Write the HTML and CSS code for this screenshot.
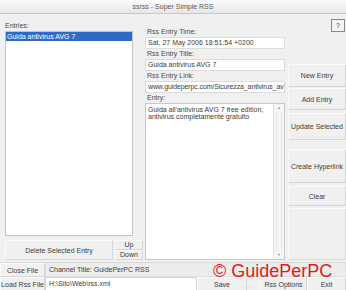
FILE: index.html
```html
<!DOCTYPE html>
<html lang="en">
<head>
    <meta charset="UTF-8">
    <title>ssrss - Super Simple RSS</title>
    <link rel="stylesheet" href="styles.css">
</head>
<body>
    <div class="window">
        <div class="titlebar">ssrss - Super Simple RSS</div>

        <div class="main">
            <div class="col-left">
                <div class="label">Entries:</div>
                <div class="listbox">
                    <div class="list-item selected">Guida antivirus AVG 7</div>
                </div>
                <div class="delete-row">
                    <button class="btn btn-delete">Delete Selected Entry</button>
                    <div class="updown">
                        <button class="btn btn-small">Up</button>
                        <button class="btn btn-small">Down</button>
                    </div>
                </div>
            </div>

            <div class="col-mid">
                <div class="label">Rss Entry Time:</div>
                <div class="field">Sat, 27 May 2006 18:51:54 +0200</div>
                <div class="label">Rss Entry Title:</div>
                <div class="field">Guida antivirus AVG 7</div>
                <div class="label">Rss Entry Link:</div>
                <div class="field field-link">www.guideperpc.com/Sicurezza_antivirus_av</div>
                <div class="label">Entry:</div>
                <div class="entry-box">
                    <div class="entry-text">Guida all'antivirus AVG 7 free edition,<br>antivirus completamente gratuito</div>
                    <div class="scrollbar">
                        <span class="arrow">&#9650;</span>
                        <span class="track"></span>
                        <span class="arrow">&#9660;</span>
                    </div>
                </div>
            </div>

            <div class="col-right">
                <button class="btn btn-help">?</button>
                <button class="btn btn-new">New Entry</button>
                <button class="btn btn-add">Add Entry</button>
                <button class="btn btn-update">Update Selected</button>
                <button class="btn btn-link">Create Hyperlink</button>
                <button class="btn btn-clear">Clear</button>
                <div class="empty-box"></div>
            </div>
        </div>

        <div class="bottom">
            <div class="bottom-row">
                <button class="btn btn-file">Close File</button>
                <div class="channel">Channel Title: GuidePerPC RSS</div>
            </div>
            <div class="bottom-row">
                <button class="btn btn-file">Load Rss File</button>
                <div class="path">H:\Sito\Web\rss.xml</div>
                <button class="btn btn-save">Save</button>
                <div class="spacer"></div>
                <button class="btn btn-options">Rss Options</button>
                <button class="btn btn-exit">Exit</button>
            </div>
        </div>

        <div class="watermark">&copy; GuidePerPC</div>
    </div>
</body>
</html>
```

FILE: styles.css
```css
body {
    margin: 0;
    font-family: "Liberation Sans", Arial, sans-serif;
    font-size: 7px;
    color: #3c3c3c;
    background: #f0f0f0;
}

.window {
    position: relative;
    width: 346px;
    height: 290px;
    overflow: hidden;
    display: flex;
    flex-direction: column;
}

.titlebar {
    height: 13px;
    line-height: 13px;
    text-align: center;
    color: #5a5a5a;
    background: linear-gradient(#fbfbfb, #e6e6e6);
    border-bottom: 1px solid #c8c8c8;
}

.main {
    display: flex;
    height: 246px;
}

.label {
    height: 10px;
    line-height: 10px;
    color: #4a4a4a;
}

.btn {
    font-family: inherit;
    font-size: 7px;
    color: #3c3c3c;
    background: #f0f0f0;
    border: 1px solid #d6d6d6;
    border-top-color: #fafafa;
    border-left-color: #fafafa;
    padding: 0;
    margin: 0;
}

/* left column */
.col-left {
    width: 138px;
    margin-left: 5px;
    padding-top: 7px;
    display: flex;
    flex-direction: column;
}

.listbox {
    height: 203px;
    background: #fff;
    border: 1px solid #c4c4c4;
    margin-right: 10px;
}

.list-item {
    height: 9px;
    line-height: 9px;
    padding-left: 1px;
}

.list-item.selected {
    background: #316ac5;
    color: #fff;
}

.delete-row {
    display: flex;
    gap: 2px;
    margin-top: 4px;
    height: 20px;
}

.btn-delete {
    width: 108px;
}

.updown {
    display: flex;
    flex-direction: column;
    width: 28px;
}

.btn-small {
    height: 10px;
    line-height: 8px;
}

/* middle column */
.col-mid {
    width: 140px;
    margin-left: 2px;
    padding-top: 13px;
    display: flex;
    flex-direction: column;
}

.col-mid .label {
    padding-left: 2px;
}

.field {
    height: 10px;
    line-height: 10px;
    background: #fff;
    border: 1px solid #dcdcdc;
    padding-left: 2px;
    white-space: nowrap;
    overflow: hidden;
}

.field-link {
    letter-spacing: -0.12px;
}

.entry-box {
    display: flex;
    height: 155px;
    background: #fff;
    border: 1px solid #c8c8c8;
}

.entry-text {
    flex: 1;
    padding: 2px 2px;
    line-height: 7px;
}

.scrollbar {
    width: 10px;
    display: flex;
    flex-direction: column;
    align-items: center;
    background: #f6f6f6;
    border-left: 1px solid #e2e2e2;
}

.arrow {
    font-size: 4px;
    color: #999;
    height: 8px;
    line-height: 8px;
}

.track {
    flex: 1;
    width: 4px;
    border-left: 1px solid #e6e6e6;
    border-right: 1px solid #e6e6e6;
}

/* right column */
.col-right {
    width: 58px;
    margin-left: 3px;
    display: flex;
    flex-direction: column;
}

.btn-help {
    align-self: flex-end;
    width: 14px;
    height: 13px;
    margin-top: 5px;
    margin-right: 1px;
    border: 1px solid #888;
    background: #f4f4f4;
}

.btn-new {
    margin-top: 32px;
    height: 23px;
}

.btn-add {
    margin-top: 1px;
    height: 22px;
}

.btn-update {
    margin-top: 3px;
    height: 27px;
}

.btn-link {
    margin-top: 9px;
    height: 34px;
}

.btn-clear {
    margin-top: 3px;
    height: 20px;
}

.empty-box {
    margin-top: 2px;
    flex: 1;
    border: 1px solid #dadada;
    border-top-color: #fafafa;
    border-left-color: #fafafa;
}

/* bottom strip */
.bottom {
    margin-top: 2px;
    display: flex;
    flex-direction: column;
    border-top: 1px solid #d8d8d8;
}

.bottom-row {
    display: flex;
    height: 14px;
}

.btn-file {
    width: 45px;
}

.channel {
    flex: 1;
    line-height: 13px;
    padding-left: 3px;
    border: 1px solid #dedede;
    border-top: none;
    background: #ececec;
}

.path {
    width: 147px;
    line-height: 12px;
    padding-left: 3px;
    background: #fff;
    border: 1px solid #d4d4d4;
}

.btn-save {
    width: 50px;
}

.spacer {
    width: 13px;
}

.btn-options {
    width: 47px;
}

.btn-exit {
    flex: 1;
}

.watermark {
    position: absolute;
    left: 213px;
    top: 261px;
    font-size: 18px;
    color: #dd1c1c;
    white-space: nowrap;
}
```
